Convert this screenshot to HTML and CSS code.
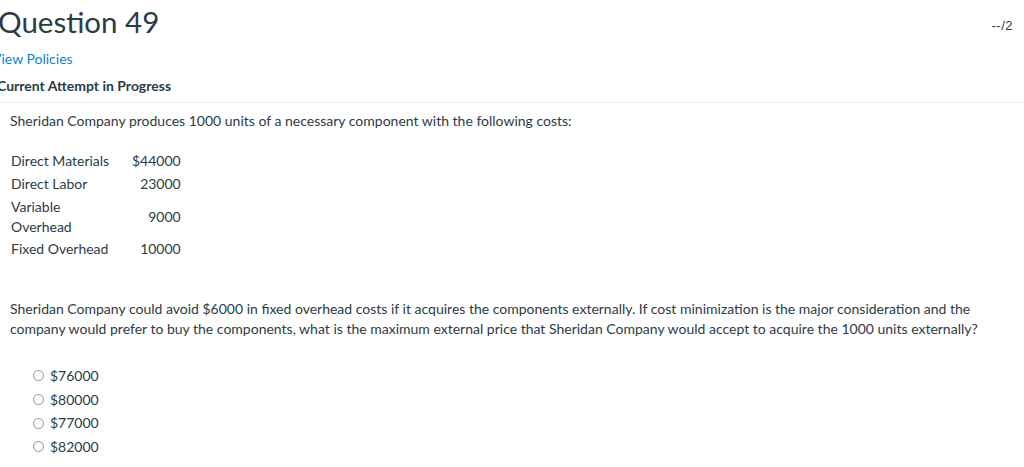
FILE: index.html
```html
<!DOCTYPE html>
<html>
<head>
<meta charset="utf-8">
<link rel="stylesheet" href="styles.css">
</head>
<body>
<div class="page">
  <header class="q-header">
    <div class="q-titles">
      <h1 class="q-title">Question 49</h1>
      <a class="q-link" href="#">View Policies</a>
      <div class="q-status">Current Attempt in Progress</div>
    </div>
    <div class="q-points">--/2</div>
  </header>
  <main class="q-body">
    <p class="q-text">Sheridan Company produces 1000 units of a necessary component with the following costs:</p>
    <table class="costs">
      <tr><td class="lbl">Direct Materials</td><td class="amt">$44000</td></tr>
      <tr><td class="lbl">Direct Labor</td><td class="amt">23000</td></tr>
      <tr><td class="lbl">Variable<br>Overhead</td><td class="amt">9000</td></tr>
      <tr><td class="lbl">Fixed Overhead</td><td class="amt">10000</td></tr>
    </table>
    <p class="q-text q-text2">Sheridan Company could avoid $6000 in fixed overhead costs if it acquires the components externally. If cost minimization is the major consideration and the company would prefer to buy the components, what is the maximum external price that Sheridan Company would accept to acquire the 1000 units externally?</p>
    <ul class="options">
      <li class="opt"><span class="radio"></span><span>$76000</span></li>
      <li class="opt"><span class="radio"></span><span>$80000</span></li>
      <li class="opt"><span class="radio"></span><span>$77000</span></li>
      <li class="opt"><span class="radio"></span><span>$82000</span></li>
    </ul>
  </main>
  <div class="fade"></div>
</div>
</body>
</html>
```
FILE: styles.css
```css
html, body {
  margin: 0;
  padding: 0;
  background: #fff;
}
body {
  font-family: Lato, "Open Sans", sans-serif;
  color: #2d3b45;
  overflow: hidden;
  height: 467px;
}
.page {
  width: 1024px;
  height: 467px;
  display: flex;
  flex-direction: column;
}
.q-header {
  display: flex;
  justify-content: space-between;
  align-items: flex-start;
  border-bottom: 1px solid #ececec;
  padding-bottom: 6px;
}
.q-titles {
  display: flex;
  flex-direction: column;
}
.q-title {
  font-size: 29.5px;
  font-weight: 400;
  line-height: 36px;
  margin: 4px 0 0 -2px;
}
.q-link {
  font-size: 14px;
  line-height: 20px;
  margin: 9px 0 0 -8px;
  color: #0a84d0;
  text-decoration: none;
}
.q-status {
  font-size: 14px;
  font-weight: 700;
  line-height: 20px;
  margin: 7px 0 0 -3px;
}
.q-points {
  font-family: "Liberation Sans", Arial, sans-serif;
  font-size: 13px;
  margin: 18px 11px 0 0;
  letter-spacing: 0.5px;
}
.q-body {
  padding: 0 10px 0 10px;
  flex: 1;
  font-size: 14px;
  line-height: 20px;
}
.q-text {
  margin: 8px 0 0 0;
}
.costs {
  border-collapse: collapse;
  margin: 19px 0 0 0;
}
.costs td {
  padding: 1px 1px 2px 1px;
  vertical-align: middle;
}
.costs tr:last-child td {
  padding-top: 0;
}
.costs .lbl {
  width: 100px;
  padding-right: 20px;
}
.costs .amt {
  text-align: right;
}
.q-text2 {
  margin-top: 38px;
}
.options {
  list-style: none;
  margin: 25px 0 0 0;
  padding: 0 0 0 23px;
}
.opt {
  display: flex;
  align-items: center;
  gap: 6px;
  height: 23.7px;
}
.radio {
  width: 11px;
  height: 11px;
  border: 1px solid #8a8f94;
  border-radius: 50%;
  box-sizing: border-box;
  display: inline-block;
}
.fade {
  position: absolute;
  left: 0;
  right: 0;
  top: 452px;
  height: 15px;
  background: linear-gradient(#ffffff, #f4f4f4);
  z-index: -1;
}
```
